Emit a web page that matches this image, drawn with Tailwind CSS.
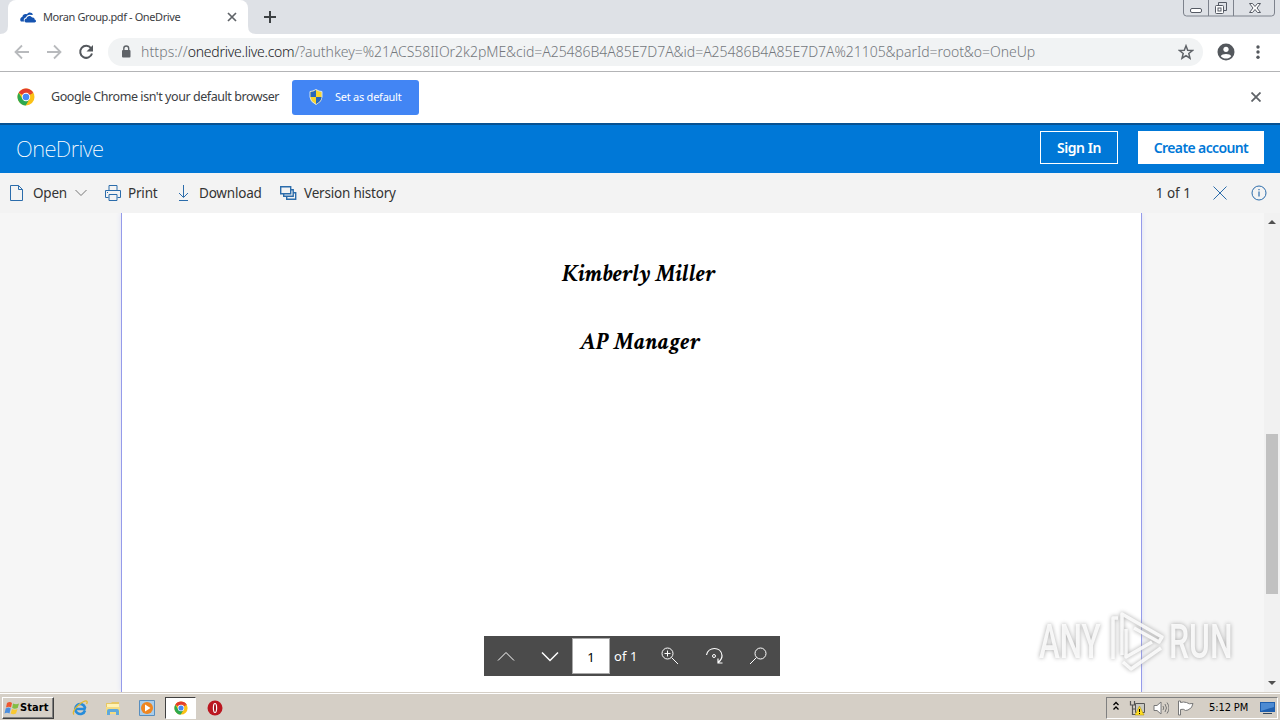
<!DOCTYPE html>
<html lang="en">
<head>
<meta charset="utf-8">
<title>Moran Group.pdf - OneDrive</title>
<script src="https://cdn.jsdelivr.net/npm/@tailwindcss/browser@4"></script>
</head>
<body class="w-[1280px] h-[720px] overflow-hidden flex flex-col bg-white font-['Noto_Sans','Open_Sans',sans-serif] whitespace-nowrap">
<svg class="hidden">
  <symbol id="chrome" viewBox="0 0 18 18">
    <circle cx="9" cy="9" r="8.5" fill="#fbc116"/>
    <path d="M9 9 1.64 4.75A8.5 8.5 0 0 1 16.36 4.75H9Z" fill="#e33b2e"/>
    <path d="M1.64 4.75A8.5 8.5 0 0 0 8.7 17.5L12.5 11 9 9 5.5 11Z" fill="#2da94f"/>
    <path d="M9 4.75h7.36L9 9Z" fill="#e33b2e"/>
    <circle cx="9" cy="9" r="4.2" fill="#fff"/><circle cx="9" cy="9" r="3.3" fill="#4688f4"/>
  </symbol>
</svg>

<!-- Tab strip -->
<header class="h-[34px] shrink-0 bg-[#dee1e6] flex items-start relative">
  <svg class="w-2 h-[34px]" viewBox="0 0 8 34"><path d="M8 34H0Q8 34 8 26Z" fill="#fff"/></svg>
  <div class="w-60 h-[34px] bg-white rounded-t-lg flex items-center pl-3 pr-[11px]">
    <svg class="w-4 h-4 shrink-0" viewBox="0 0 16 16"><path d="M1 12.5C-.5 11 .3 8.400 2.300 8.100 2.500 5.500 5 4.300 7 5.200 8.500 2.500 12 3 13 5.800L11 6C8.500 5.200 6.500 6.500 6 8.500 3.800 8.800 3.300 11 4.200 12.500Z" fill="#1553b0"/><path d="M6 13.500C3.800 13 4 9.900 6.600 9.600 6.800 6.800 10.500 5.800 12.200 8.500 14 8.200 14.700 9.500 14.600 10.500 16.600 11 16.400 13.500 14.500 13.500Z" fill="#1553b0"/></svg>
    <span class="ml-[7px] w-[184px] shrink-0 text-[11px] tracking-[-0.400px] text-[#3c4043]">Moran Group.pdf - OneDrive</span>
    <svg class="w-[10px] h-[10px] shrink-0" viewBox="0 0 10 10"><path d="M1 1l8 8M9 1l-8 8" stroke="#5f6368" stroke-width="1.700"/></svg>
  </div>
  <svg class="w-2 h-[34px]" viewBox="0 0 8 34"><path d="M0 34H8Q0 34 0 26Z" fill="#fff"/></svg>
  <svg class="w-3 h-3 mt-[11px] ml-2" viewBox="0 0 12 12"><path d="M6 0v12M0 6h12" stroke="#3c4043" stroke-width="2"/></svg>
  <svg class="w-[94px] h-[18px] ml-auto mr-1" viewBox="0 0 94 18" fill="none" stroke="#7d828c"><path d="M1.500-1v14q0 3 3 3h85q3 0 3-3v-14M26.500 0v16M51.500 0v16"/><rect x="8.500" y="8.500" width="11" height="4" rx="1.500" fill="#fff" stroke="#555a64"/><path d="M36.500 5V2.500h8v8h-2.500" stroke="#555a64"/><rect x="33.500" y="5.500" width="8" height="8" rx="1" fill="#fff" stroke="#555a64"/><rect x="36" y="8" width="3" height="3" stroke="#555a64"/><path d="M67.500 3.500h3l2.500 3 2.500-3h3l-3.500 4.500 3.500 4.500h-3l-2.500-3-2.500 3h-3l3.500-4.500z" fill="#fff" stroke="#555a64"/></svg>
</header>

<!-- Address bar -->
<div class="h-[38px] shrink-0 bg-white border-b border-[#b3b4b6] flex items-center pl-[14px] pb-[2px]">
  <svg class="w-4 h-4" viewBox="0 0 16 16" fill="none" stroke="#b8babd" stroke-width="1.800"><path d="M15 8H2M8 1.500 1.500 8 8 14.500"/></svg>
  <svg class="w-4 h-4 ml-4" viewBox="0 0 16 16" fill="none" stroke="#b8babd" stroke-width="1.800"><path d="M1 8h13M8 1.500 14.500 8 8 14.500"/></svg>
  <svg class="w-4 h-4 ml-4" viewBox="0 0 16 16" fill="none" stroke="#54585d" stroke-width="2"><path d="M13 4.200A6 6 0 1 0 14 9.500"/><path d="M15 1v6.500H8.500z" fill="#54585d" stroke="none"/></svg>
  <div class="ml-[14px] w-[1095px] h-7 rounded-full bg-[#f1f3f4] flex items-center pl-[13px] pr-[9px]">
    <svg class="w-[10px] h-[13px] shrink-0" viewBox="0 0 10 13"><rect x="1" y="5" width="8.500" height="7.500" rx="1" fill="#5f6368"/><path d="M2.800 5V3.500a2.400 2.400 0 0 1 4.900 0V5" fill="none" stroke="#5f6368" stroke-width="1.400"/></svg>
    <span class="ml-[10px] text-[14px] font-light text-[#74787d]"><span class="tracking-[0.100px]">https://</span><span class="tracking-[-0.250px] text-[#202124]">onedrive.live.com</span><span class="tracking-[-0.040px]">/?authkey=%21ACS58IIOr2k2pME&amp;cid=A25486B4A85E7D7A&amp;id=A25486B4A85E7D7A%21105&amp;parId=root&amp;o=OneUp</span></span>
    <svg class="w-4 h-4 ml-auto shrink-0" viewBox="0 0 16 16" fill="none" stroke="#5f6368" stroke-width="1.500"><path d="m8 1.800 1.700 4.400 4.800.3-3.700 3 1.200 4.700L8 11.600 4 14.200l1.200-4.700-3.700-3 4.800-.3z"/></svg>
  </div>
  <svg class="w-[18px] h-[18px] ml-[14px]" viewBox="0 0 18 18"><circle cx="9" cy="9" r="8.500" fill="#54585d"/><circle cx="9" cy="6.300" r="2.600" fill="#fff"/><path d="M3.800 13.200C4.700 10.300 13.300 10.300 14.200 13.200 11.700 16.300 6.300 16.300 3.800 13.200Z" fill="#fff"/></svg>
  <svg class="w-1 h-4 ml-[21px]" viewBox="0 0 4 16" fill="#54585d"><circle cx="2" cy="3" r="1.700"/><circle cx="2" cy="8" r="1.700"/><circle cx="2" cy="13.200" r="1.700"/></svg>
</div>

<!-- Default browser prompt -->
<div class="h-[51px] shrink-0 bg-white flex items-center pl-[17px] pr-[19px] pb-[1px]">
  <svg class="w-[18px] h-[18px]"><use href="#chrome"/></svg>
  <span class="ml-4 w-[241px] text-[12.500px] tracking-[-0.440px] text-[#3c4043]">Google Chrome isn't your default browser</span>
  <button class="w-[127px] h-[35px] rounded-[3px] bg-[#4285f4] text-white text-[11px] flex items-center pl-[17px]">
    <svg class="w-[14px] h-4 mr-3" viewBox="0 0 14 16"><path d="M7 .5Q4 2.500 1 2.500V8Q1 12.500 7 15.500 13 12.500 13 8V2.500Q10 2.500 7 .5Z" fill="#f7d52f" stroke="#d7e2ec"/><path d="M7 1Q4.500 2.900 1.500 3V8H7ZM7 8h5.500q0 4-5.500 7Z" fill="#2666bd"/></svg>
    <span class="tracking-[-0.250px]">Set as default</span>
  </button>
  <svg class="w-[10px] h-[10px] ml-auto" viewBox="0 0 10 10"><path d="M.500.500l9 9M9.500.500l-9 9" stroke="#5f6368" stroke-width="1.800"/></svg>
</div>

<!-- OneDrive header -->
<div class="h-[50px] shrink-0 bg-[#0078d7] border-t-2 border-[#075292] flex items-center pl-4 pr-4 pb-[3px]">
  <span class="mt-[2px] text-[22px] font-extralight tracking-[-0.550px] text-white">OneDrive</span>
  <button class="ml-auto w-[78px] h-[33px] border border-white text-white text-[14px] font-semibold"><span class="tracking-[-0.450px]">Sign In</span></button>
  <button class="ml-5 w-[126px] h-[33px] bg-white text-[#0078d7] text-[14px] font-semibold"><span class="tracking-[-0.620px]">Create account</span></button>
</div>

<!-- Command bar -->
<div class="h-10 shrink-0 bg-[#f3f3f3] text-[13.500px] tracking-[-0.200px] text-[#333] flex items-center pl-[9px] pr-[13px]">
  <svg class="w-4 h-[18px]" viewBox="0 0 16 18" fill="none" stroke="#2b6cab"><path d="M1.500 1.500h8l4 4v11h-12zM9.500 1.500v4h4"/></svg>
  <span class="ml-2 w-[42px]">Open</span>
  <svg class="w-3 h-2" viewBox="0 0 12 8" fill="none" stroke="#777"><path d="m.5 1 5.500 5.500L11.500 1"/></svg>
  <svg class="w-[18px] h-[18px] ml-[17px]" viewBox="0 0 18 18" fill="none" stroke="#2b6cab"><path d="M5 7V1.500h8V7M4.500 13.500h-3v-7h15v7h-3M5 10.500h8v6H5zM3 8.500h1"/></svg>
  <span class="ml-[6px] w-[48px]">Print</span>
  <svg class="w-3 h-[18px] ml-[1px]" viewBox="0 0 12 18" fill="none" stroke="#2b6cab"><path d="M6.500 1v12M2 9l4.500 4.500L11 9M2 16.500h9"/></svg>
  <span class="ml-[10px] w-[80px] tracking-[-0.200px]">Download</span>
  <svg class="w-[18px] h-[18px]" viewBox="0 0 18 18" fill="none" stroke="#2b6cab" stroke-width="1.400"><path d="M1.700 2.700h10v7h-10zM4.700 9.700v2.500h9.500V5.700h-2.500M7.700 12.700v2.500h9V8.700h-2.500"/></svg>
  <span class="ml-[7px]">Version history</span>
  <span class="ml-auto mr-[22px] tracking-normal">1 of 1</span>
  <svg class="w-[14px] h-[14px]" viewBox="0 0 14 14" stroke="#2b6cab"><path d="m.5.5 13 13M13.500.500l-13 13"/></svg>
  <svg class="w-4 h-4 ml-6" viewBox="0 0 16 16" fill="none" stroke="#2b6cab"><circle cx="8" cy="8" r="7"/><path d="M8 6.500v5M8 4v1.300" stroke-width="1.200"/></svg>
</div>

<!-- Document viewer -->
<main class="h-[479px] shrink-0 bg-[#f6f6f6] flex relative">
  <section class="ml-[121px] w-[1021px] bg-white border-x border-x-[#959bea] shadow-[0_0_5px_#dcdff5] [clip-path:inset(0_-6px_0_-6px)] font-['Crimson_Text','Liberation_Serif',serif] text-[24px] leading-[28px] font-bold italic text-black flex flex-col pt-[47px]">
    <p class="ml-[440px]">Kimberly Miller</p>
    <p class="ml-[458px] mt-10 tracking-[0.400px]">AP Manager</p>
  </section>
  <div class="ml-auto w-4 bg-[#f1f1f1] flex flex-col items-center">
    <svg class="w-2 h-4" viewBox="0 0 8 16"><path d="M0 11 4 7l4 4z" fill="#505050"/></svg>
    <div class="w-3 h-40 mt-[205px] bg-[#c1c1c1]"></div>
    <svg class="w-2 h-4 mt-auto" viewBox="0 0 8 16"><path d="M0 5l4 4 4-4z" fill="#505050"/></svg>
  </div>
  <div class="absolute left-[484px] top-[423px] w-[296px] h-10 bg-[#4b4b4b] text-white flex items-center text-[13px]">
    <svg class="w-[88px] h-10" viewBox="0 0 88 40" fill="none" stroke="#fff"><path d="m14 24.500 8-8 8 8"/><path d="m58 16.500 8 8 8-8" stroke-width="1.500"/></svg>
    <div class="w-[38px] h-9 border border-[#aaa] bg-white text-black flex items-center justify-center pt-1">1</div>
    <span class="ml-1 mt-[2px] tracking-[0.100px]">of 1</span>
    <svg class="w-[132px] h-10 ml-auto" viewBox="0 0 132 40" fill="none" stroke="#fff"><circle cx="19.500" cy="17.500" r="5.500"/><path d="M23.500 21.500 30 28M16.500 17.500h6M19.500 14.500v6"/><path d="M58.500 19C60 10.500 73 10 74 19.500q.2 3.500-3.800 7M70 22.500v4.500h4.500" stroke-width="1.200"/><circle cx="66" cy="20" r="1.500"/><circle cx="112.500" cy="17.500" r="5.500"/><path d="m108.500 21.500-6.500 6.500"/></svg>
  </div>
  <div class="absolute left-[1039px] top-[396px] flex items-center text-[49px] leading-none font-medium font-['Roboto',sans-serif] text-white/85 [filter:drop-shadow(0_0_2px_#999)]">
    <span class="inline-block w-[67px]"><span class="inline-block origin-left scale-x-[.64]">ANY</span></span>
    <svg class="w-[62px] h-[64px]" viewBox="0 0 62 64" fill="none" stroke="#fff" stroke-opacity=".85" stroke-width="3.500" stroke-linejoin="round"><path d="M12 9H7v41M16 46V5l40 23-3 5-25-14M17 53l8 7 30-21M20 20v28l26-15"/></svg>
    <span class="inline-block w-[68px] ml-[1px]"><span class="inline-block origin-left scale-x-[.65]">RUN</span></span>
  </div>
</main>

<!-- Taskbar -->
<footer class="h-7 shrink-0 bg-[#d5cfc6] border-t border-[#d5cfc6] shadow-[inset_0_1px_#fff] flex items-center font-['DejaVu_Sans_Condensed','DejaVu_Sans',sans-serif] text-[11px] text-black">
  <div class="ml-[2px] w-[52px] h-[22px] mt-[2px] border border-t-white border-l-white border-r-[#404040] border-b-[#404040] shadow-[inset_-1px_-1px_#808080] flex items-center font-bold pl-[1px]">
    <svg class="w-4 h-4" viewBox="0 0 16 16"><path d="M3 3q3-2 5 0L7 7.500Q5 6 2 7.500Z" fill="#ee5730"/><path d="M9 3.500q3 1.500 6 0L13.700 8q-3 1.500-5.500 0Z" fill="#83bd43"/><path d="M1.700 8.500q3-2 5 0l-1.200 5Q3 12 .5 13.500Z" fill="#4b8edf"/><path d="M8 9q3 1.500 5.500 0L12 13.500q-3 1.500-5.300 0Z" fill="#f9c831"/></svg>
    <span class="mt-[1px] tracking-[0.100px]">Start</span>
  </div>
  <svg class="w-4 h-4 ml-[18px] mt-[2px]" viewBox="0 0 16 16" fill="none"><path d="M13 10.500A5 5 0 1 1 13 7.500L12.500 9H4" stroke="#278cda" stroke-width="2.600"/><path d="M2 14.500C-1.500 10.500 13-2 15 1.500q.5 1-.5 2.500" stroke="#e4b92e" stroke-width="1.300"/></svg>
  <svg class="w-4 h-4 ml-[17px] mt-[2px]" viewBox="0 0 16 16"><path d="M1 3h5l1-1h7v11H1z" fill="#e7c765"/><path d="M2 4h12v3H2z" fill="#fff3b5"/><path d="M1 7h14v7H1z" fill="#f4dc83"/><path d="M2 15v-4q0-2 2-2h8q2 0 2 2v4h-3v-3H5v3z" fill="#5fa9dc"/></svg>
  <svg class="w-4 h-4 ml-[18px] mt-[2px]" viewBox="0 0 16 16"><path d="M.500.500h15v15H.500z" fill="#a9cdea" stroke="#588ebe"/><circle cx="8" cy="8" r="6" fill="#ef8620"/><path d="m6 4.500 5.500 3.500L6 11.500z" fill="#fff"/></svg>
  <div class="w-[31px] h-[22px] ml-[10px] mt-[2px] bg-white border border-t-[#404040] border-l-[#404040] border-r-white border-b-white flex items-center justify-center"><svg class="w-[14px] h-[14px]"><use href="#chrome"/></svg></div>
  <svg class="w-4 h-4 ml-[11px] mt-[2px]" viewBox="0 0 16 16"><circle cx="8" cy="8" r="7.500" fill="#bb1720"/><ellipse cx="8" cy="8" rx="2.200" ry="5" fill="#fff"/><ellipse cx="8" cy="8" rx="1" ry="4" fill="#9e101a"/></svg>
  <div class="ml-auto mr-[2px] w-[172px] h-[22px] mt-[2px] border border-t-[#808080] border-l-[#808080] border-r-white border-b-white flex items-center pl-[5px]">
    <svg class="w-2 h-3 -mt-[3px]" viewBox="0 0 8 12" fill="none" stroke="#000" stroke-width="1.300"><path d="m1.500 5 2.500-2.500L6.500 5M1.500 9.500 4 7l2.500 2.500"/></svg>
    <svg class="w-4 h-4 ml-[9px]" viewBox="0 0 16 16"><path d="M6.500 3.500h9v9h-9z" fill="#c9c9c2" stroke="#555"/><path d="M1.500 1v4h4V1M3.500 5v9.500H8M3.500 9H7" fill="none" stroke="#555" stroke-width="1.200"/><path d="m10.500 6 4.500 9H6z" fill="#ffde23" stroke="#a98b00" stroke-width=".5"/><path d="M10.500 9v3M10.500 13v1" stroke="#000"/></svg>
    <svg class="w-4 h-4 ml-2" viewBox="0 0 16 16" fill="none" stroke="#777"><path d="M1 5.500h3L8 2v12l-4-3.500H1z" fill="#fff"/><path d="M10 6q1.500 2 0 4M12 4q3 4 0 8M14 2.500q4 5.500 0 11"/></svg>
    <svg class="w-[17px] h-4 ml-2" viewBox="0 0 17 16"><path d="M1.500 1v14h2V9.500q3-1 5 1 2 .5 6-3l1.500-4q-4 1-6.500-1-3-1-6 0V1z" fill="#fff" stroke="#777"/></svg>
    <span class="ml-[15px] mt-[1px] w-[51px] tracking-[-0.100px]">5:12 PM</span>
    <svg class="w-4 h-[14px] shrink-0" viewBox="0 0 16 14"><path d="M0 1h15v10H0z" fill="#1f5fae"/><path d="M1 2h13v4L1 10z" fill="#4d8bd3"/><path d="M3 12h9v1H3z" fill="#33475c"/></svg>
  </div>
</footer>
</body>
</html>
